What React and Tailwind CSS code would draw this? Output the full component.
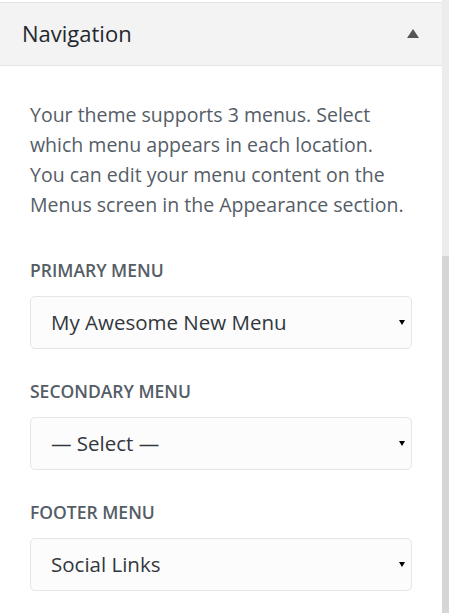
const menus = [
  { label: 'Primary Menu', value: 'My Awesome New Menu' },
  { label: 'Secondary Menu', value: '— Select —' },
  { label: 'Footer Menu', value: 'Social Links' },
];

function MenuSelect({ label, value }) {
  return (
    <div className="flex flex-col">
      <span className="text-[17.5px] leading-[24px] font-semibold uppercase text-[#555d66]">{label}</span>
      <div className="mt-[14px] h-[53px] w-[382px] flex items-center justify-between pl-[20px] pr-[6px] bg-[#fcfcfc] border border-[#e6e6e6] rounded-[5px]">
        <span className="text-[20.5px] text-[#32373c]">{value}</span>
        <span className="w-0 h-0 border-l-[3px] border-r-[3px] border-t-[5px] border-l-transparent border-r-transparent border-t-black" />
      </div>
    </div>
  );
}

export default function App() {
  return (
    <div className="w-[449px] h-[613px] flex bg-white overflow-hidden" style={{ fontFamily: '"Open Sans", "Noto Sans", sans-serif' }}>
      <div className="w-[442px] flex flex-col pt-[2px]">
        {/* Section header */}
        <div className="h-[64px] flex items-center justify-between pl-[22px] pr-[23px] pb-[2px] bg-[#f3f3f3] border-t border-b border-[#e4e4e4]">
          <h3 className="text-[22px] font-medium text-[#23282d]">Navigation</h3>
          <span className="w-0 h-0 border-l-[6px] border-r-[6px] border-b-[9px] border-l-transparent border-r-transparent border-b-[#555]" />
        </div>

        {/* Body */}
        <div className="flex flex-col pl-[30px] pt-[34px]">
          <p className="text-[19.5px] leading-[30px] text-[#555d66] whitespace-nowrap">
            Your theme supports 3 menus. Select<br />
            which menu appears in each location.<br />
            You can edit your menu content on the<br />
            Menus screen in the Appearance section.
          </p>
          <div className="mt-[38px] flex flex-col gap-[30px]">
            {menus.map((m) => (
              <MenuSelect key={m.label} label={m.label} value={m.value} />
            ))}
          </div>
        </div>
      </div>

      {/* Scrollbar */}
      <div className="w-[7px] flex flex-col">
        <div className="h-[256px] bg-[#ececec]" />
        <div className="flex-1 bg-[#d6d6d6]" />
      </div>
    </div>
  );
}
